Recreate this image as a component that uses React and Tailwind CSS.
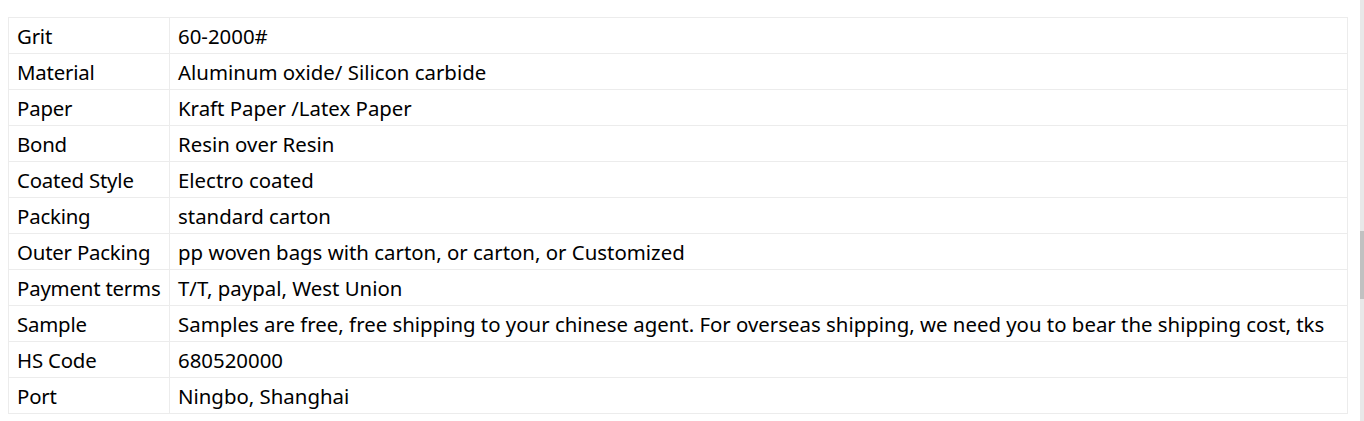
const rows = [
  ['Grit', '60-2000#'],
  ['Material', 'Aluminum oxide/ Silicon carbide'],
  ['Paper', 'Kraft Paper /Latex Paper'],
  ['Bond', 'Resin over Resin'],
  ['Coated Style', 'Electro coated'],
  ['Packing', 'standard carton'],
  ['Outer Packing', 'pp woven bags with carton, or carton, or Customized'],
  ['Payment terms', 'T/T, paypal, West Union'],
  ['Sample', 'Samples are free, free shipping to your chinese agent. For overseas shipping, we need you to bear the shipping cost, tks'],
  ['HS Code', '680520000'],
  ['Port', 'Ningbo, Shanghai'],
];

export default function App() {
  return (
    <div className="flex h-[421px] bg-white text-black" style={{ fontFamily: '"Noto Sans", "Open Sans", sans-serif' }}>
      <div className="flex-1 pt-[17px] pl-2 pr-3">
        <table className="w-full table-fixed border-collapse text-[20.4px] leading-none">
          <colgroup>
            <col className="w-[161px]" />
            <col />
          </colgroup>
          <tbody>
            {rows.map(([k, v]) => (
              <tr key={k} className="h-[36px]">
                <td className="border border-[#ececec] pl-[8px] pt-[1px] whitespace-nowrap tracking-[-0.2px]">{k}</td>
                <td className="border border-[#ececec] px-[8px] pt-[1px] whitespace-nowrap">{v}</td>
              </tr>
            ))}
          </tbody>
        </table>
      </div>
      <div className="w-1 bg-[#e8e8e8]">
        <div className="mt-[231px] h-[68px] bg-[#c1c1c1]" />
      </div>
    </div>
  );
}
